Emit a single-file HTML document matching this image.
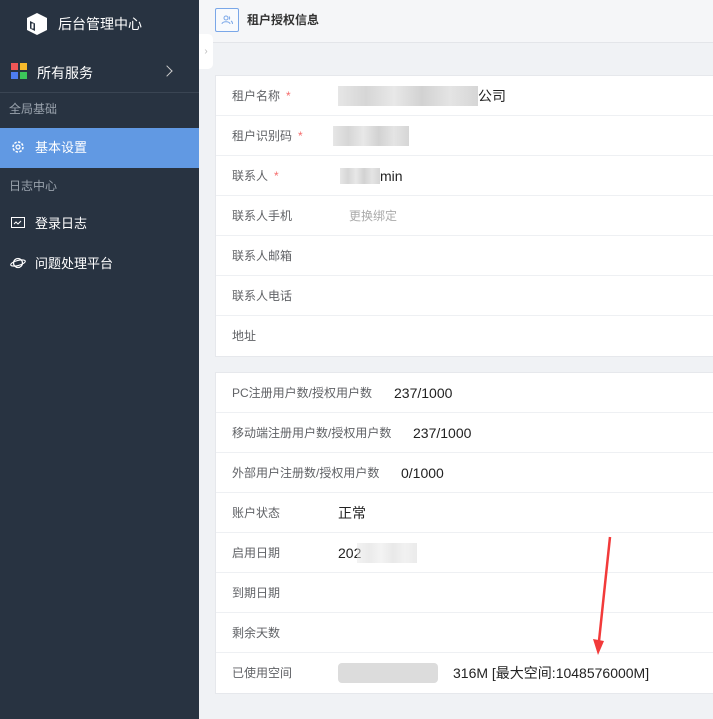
<!DOCTYPE html>
<html><head><meta charset="utf-8"><style>
*{margin:0;padding:0;box-sizing:border-box}
body{width:713px;height:719px;overflow:hidden;background:#f0f2f5;font-family:"Liberation Sans","Noto Sans CJK SC",sans-serif;position:relative}
.side{position:absolute;left:0;top:0;width:199px;height:719px;background:#283341;color:#fff}
.logo{position:absolute;left:26px;top:12px}
.title{position:absolute;left:58px;top:14px;font-size:14px}
.svc{position:absolute;left:37px;top:63px;font-size:14px}
.grp{position:absolute;left:9px;font-size:12px;color:#9aa3ad}
.item{position:absolute;left:0;width:199px;height:40px;font-size:13px;line-height:40px;padding-left:35px}
.act{background:#6199e3}
.top{position:absolute;left:199px;top:0;right:0;height:43px;background:#f5f6f8;border-bottom:1px solid #e3e5e9}
.card{position:absolute;left:215px;right:0;background:#fff;border:1px solid #e6e8ec;border-right:none}
.row{height:40px;border-bottom:1px solid #eef0f3;position:relative;font-size:12px;color:#606266;line-height:40px;padding-left:16px}
.row:last-child{border-bottom:none}
.v{position:absolute;top:0;font-size:14px;color:#222}
.s{color:#f56c6c;margin-left:6px}
.blur{position:absolute;background:linear-gradient(90deg,#e6e6e6,#d6d6d6,#e8e8e8,#d2d2d2,#e4e4e4,#d6d6d6);}
</style></head><body>
<div class="side">
<svg class="logo" width="22" height="24" viewBox="0 0 22 24"><path d="M11 1L21 6V18L11 23L1 18V6Z" fill="#fff"/><path d="M4 9L9 11.5V19L4 16.5Z" fill="#283341"/><path d="M5.5 11.5h2v5h-2z" fill="#fff"/></svg>
<div class="title">后台管理中心</div>
<svg style="position:absolute;left:11px;top:63px" width="16" height="16"><rect width="7" height="7" fill="#f05656"/><rect x="9" width="7" height="7" fill="#f6b92b"/><rect y="9" width="7" height="7" fill="#4d7cf0"/><rect x="9" y="9" width="7" height="7" fill="#3cc55a"/></svg>
<div class="svc">所有服务</div>
<div style="position:absolute;left:163px;top:67px;width:8px;height:8px;border-right:1.5px solid #ccc;border-top:1.5px solid #ccc;transform:rotate(45deg)"></div>
<div style="position:absolute;left:0;top:92px;width:199px;height:1px;background:#3a4553"></div>
<div class="grp" style="top:100px">全局基础</div>
<div class="item act" style="top:128px">基本设置</div>
<svg style="position:absolute;left:11px;top:140px" width="14" height="14" viewBox="0 0 14 14"><circle cx="7" cy="7" r="5" fill="none" stroke="#fff" stroke-width="1.5" stroke-dasharray="2.5 1.4"/><circle cx="7" cy="7" r="2" fill="none" stroke="#fff" stroke-width="1.2"/></svg>
<div class="grp" style="top:177px">日志中心</div>
<div class="item" style="top:204px">登录日志</div>
<svg style="position:absolute;left:11px;top:217px" width="14" height="12"><rect x="0.5" y="0.5" width="13" height="10" fill="none" stroke="#fff"/><path d="M3 7l2-2 2 2 3-3" stroke="#fff" fill="none"/></svg>
<div class="item" style="top:244px">问题处理平台</div>
<svg style="position:absolute;left:10px;top:257px" width="16" height="12"><ellipse cx="8" cy="6" rx="4.5" ry="4.5" fill="none" stroke="#fff" stroke-width="1.3"/><ellipse cx="8" cy="6" rx="7.5" ry="2.5" fill="none" stroke="#fff" stroke-width="1.1" transform="rotate(-15 8 6)"/></svg>
</div>
<div class="top">
<div style="position:absolute;left:16px;top:8px;width:24px;height:24px;border:1px solid #7aa7e8;border-radius:2px;background:#f8fafd"></div>
<svg style="position:absolute;left:22px;top:14px" width="12" height="12"><circle cx="5" cy="4" r="2" fill="none" stroke="#7aa7e8"/><path d="M1 10c0-3 8-3 8 0M8 2.5a2 2 0 010 3M10 7c1 .5 1.5 1.5 1.5 3" fill="none" stroke="#7aa7e8"/></svg>
<div style="position:absolute;left:48px;top:11px;font-size:12px;color:#333;font-weight:bold">租户授权信息</div>
</div>
<div style="position:absolute;left:199px;top:34px;width:14px;height:35px;background:#fff;border-radius:0 5px 5px 0;color:#bbb;font-size:10px;line-height:35px;text-align:center">›</div>
<div class="card" style="top:75px">
<div class="row">租户名称<span class="s">*</span><div class="blur" style="left:122px;top:10px;width:140px;height:20px"></div><span class="v" style="left:262px">公司</span></div>
<div class="row">租户识别码<span class="s">*</span><div class="blur" style="left:117px;top:10px;width:76px;height:20px"></div></div>
<div class="row">联系人<span class="s">*</span><div class="blur" style="left:124px;top:12px;width:40px;height:16px"></div><span class="v" style="left:164px">min</span></div>
<div class="row">联系人手机<span style="position:absolute;left:133px;color:#aaa">更换绑定</span></div>
<div class="row">联系人邮箱</div>
<div class="row">联系人电话</div>
<div class="row">地址</div>
</div>
<div class="card" style="top:372px">
<div class="row">PC注册用户数/授权用户数<span class="v" style="left:178px">237/1000</span></div>
<div class="row">移动端注册用户数/授权用户数<span class="v" style="left:197px">237/1000</span></div>
<div class="row">外部用户注册数/授权用户数<span class="v" style="left:185px">0/1000</span></div>
<div class="row">账户状态<span class="v" style="left:122px">正常</span></div>
<div class="row">启用日期<span class="v" style="left:122px">202</span><div class="blur" style="left:141px;top:10px;width:60px;height:20px;opacity:.5"></div></div>
<div class="row">到期日期</div>
<div class="row">剩余天数</div>
<div class="row">已使用空间<div style="position:absolute;left:122px;top:10px;width:100px;height:20px;background:#dcdcdc;border-radius:4px"></div><span class="v" style="left:237px">316M [最大空间:1048576000M]</span></div>
</div>
<svg style="position:absolute;left:590px;top:535px" width="24" height="125"><path d="M20 2L9 106" stroke="#f23a3a" stroke-width="2.5"/><path d="M3 104L8 120L14 106Z" fill="#f23a3a"/></svg>
</body></html>
